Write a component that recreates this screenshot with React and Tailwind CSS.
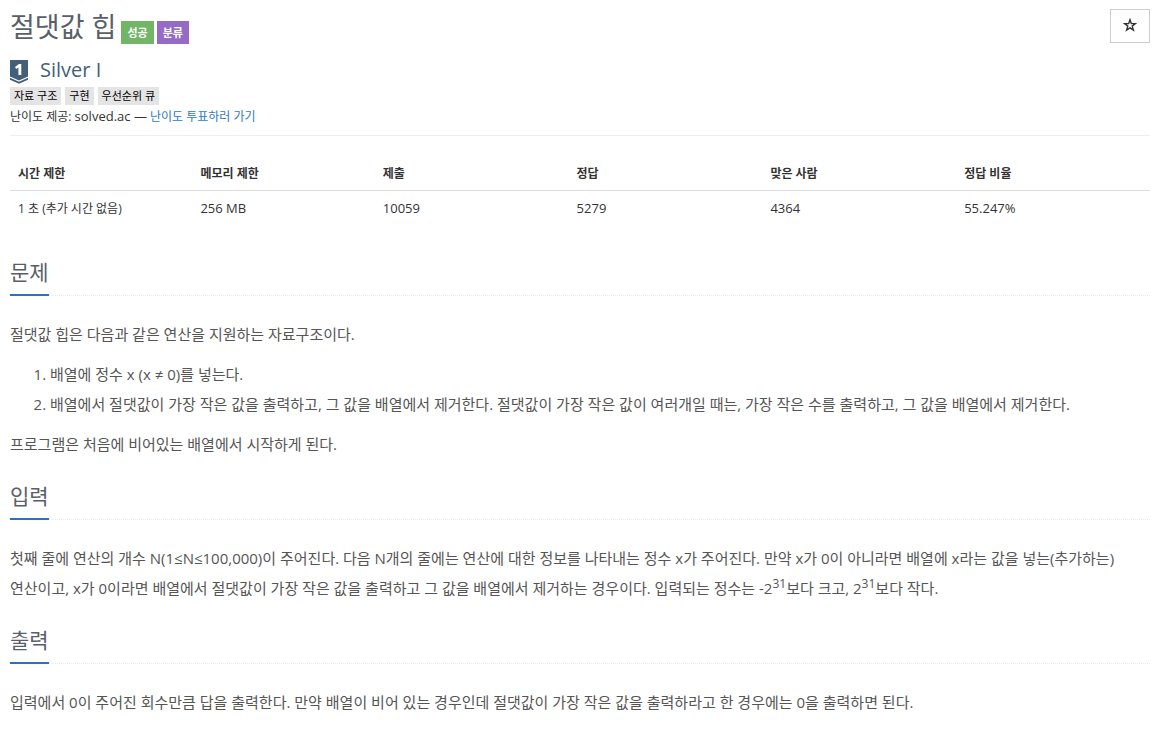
import clsx from 'clsx'

const stats = [
  { label: '시간 제한', value: '1 초 (추가 시간 없음)', width: 'w-[16%]', size: 'text-xs leading-5' },
  { label: '메모리 제한', value: '256 MB', width: 'w-[16%]' },
  { label: '제출', value: '10059', width: 'w-[17%]' },
  { label: '정답', value: '5279', width: 'w-[17%]' },
  { label: '맞은 사람', value: '4364', width: 'w-[17%]' },
  { label: '정답 비율', value: '55.247%', width: 'w-[17%]' },
]

const tags = ['자료 구조', '구현', '우선순위 큐']

function Label({ color, children }) {
  return (
    <span className={clsx('h-[23px] px-[6px] text-[11px] leading-[23px] font-bold text-white', color)}>
      {children}
    </span>
  )
}

// Solved.ac tier badge
function TierBadge() {
  return (
    <svg viewBox="0 0 18 24" className="w-[18px] h-6" aria-hidden="true">
      <path d="M0 0h18v16.4l-9 4-9-4z" fill="#435f7a" />
      <path d="M0 17.8l9 4 9-4v2l-9 4-9-4z" fill="#435f7a" />
      <path d="M11.3 15H8.4V7.6L6.2 9 5 7.1 9 4h2.3z" fill="#fff" />
    </svg>
  )
}

function StarIcon() {
  return (
    <svg viewBox="0 0 14 14" className="mr-px mb-0.5 w-[14px] h-[14px]" fill="none" stroke="#333" strokeWidth="1.4" aria-hidden="true">
      <path d="M7 1.8l1.3 3.7 4.2.1-3.3 2.5 1.2 4L7 9.8l-3.4 2.3 1.2-4-3.3-2.5 4.2-.1z" />
    </svg>
  )
}

// Section with underlined heading
function Section({ title, children }) {
  return (
    <section className="mb-[21px]">
      <div className="mb-[23px] border-b border-dotted border-[#eaeaee]">
        <h2 className="-mb-px inline-block border-b-2 border-[#3071b9] pb-[5px] align-bottom text-[21px] leading-[33px] text-[#585f69]">
          {title}
        </h2>
      </div>
      <div className="space-y-[10px] text-[15px] leading-[30px] break-keep text-[#555]">{children}</div>
    </section>
  )
}

function App() {
  return (
    <main
      lang="ko"
      className="bg-white pt-[9px] pr-[9px] pl-[10px] font-['Open_Sans','Noto_Sans_CJK_KR',sans-serif] text-[13px] leading-5 text-[#333]"
    >
      <header className="flex items-start justify-between border-b border-[#eee] pb-2">
        <div>
          <div className="flex items-end gap-[5px]">
            <h1 className="text-[27px] leading-[35px] text-[#585f69]">절댓값 힙</h1>
            <div className="flex gap-[3px]">
              <Label color="bg-[#72b566]">성공</Label>
              <Label color="bg-[#966bc6]">분류</Label>
            </div>
          </div>
          <div className="mt-3 flex items-end gap-3">
            <TierBadge />
            <span className="text-xl leading-7 text-[#435f7a]">Silver I</span>
          </div>
          <ul className="mt-[3px] flex gap-1 text-[11px] leading-[18px] text-black">
            {tags.map((tag) => (
              <li key={tag} className="bg-[#e4e4e4] px-1">{tag}</li>
            ))}
          </ul>
          <p className="mt-px text-xs leading-5">
            난이도 제공: <span className="text-[13px]">solved.ac —</span>{' '}
            <a href="#vote" className="text-[#3079c2]">난이도 투표하러 가기</a>
          </p>
        </div>
        <button
          type="button"
          aria-label="즐겨찾기"
          className="flex h-[34px] w-10 items-center justify-center border border-[#ccc]"
        >
          <StarIcon />
        </button>
      </header>

      <table className="mt-5 mb-[29px] w-full table-fixed text-left">
        <thead>
          <tr className="border-b border-[#ddd]">
            {stats.map(({ label, width }) => (
              <th key={label} className={clsx('px-2 pt-2 pb-[6px] text-xs leading-5 font-bold', width)}>{label}</th>
            ))}
          </tr>
        </thead>
        <tbody>
          <tr>
            {stats.map(({ label, value, size }) => (
              <td key={label} className={clsx('px-2 pt-[7px] pb-2 align-baseline', size)}>{value}</td>
            ))}
          </tr>
        </tbody>
      </table>

      <Section title="문제">
        <p>절댓값 힙은 다음과 같은 연산을 지원하는 자료구조이다.</p>
        <ol className="list-decimal pl-10">
          <li>배열에 정수 x (x ≠ 0)를 넣는다.</li>
          <li>
            배열에서 절댓값이 가장 작은 값을 출력하고, 그 값을 배열에서 제거한다. 절댓값이 가장 작은 값이 여러개일
            때는, 가장 작은 수를 출력하고, 그 값을 배열에서 제거한다.
          </li>
        </ol>
        <p>프로그램은 처음에 비어있는 배열에서 시작하게 된다.</p>
      </Section>

      <Section title="입력">
        <p>
          첫째 줄에 연산의 개수 N(1≤N≤100,000)이 주어진다. 다음 N개의 줄에는 연산에 대한 정보를 나타내는 정수 x가
          주어진다. 만약 x가 0이 아니라면 배열에 x라는 값을 넣는(추가하는) 연산이고, x가 0이라면 배열에서 절댓값이
          가장 작은 값을 출력하고 그 값을 배열에서 제거하는 경우이다. 입력되는 정수는 -2
          <sup className="text-xs leading-none">31</sup>보다 크고, 2
          <sup className="text-xs leading-none">31</sup>보다 작다.
        </p>
      </Section>

      <Section title="출력">
        <p>
          입력에서 0이 주어진 회수만큼 답을 출력한다. 만약 배열이 비어 있는 경우인데 절댓값이 가장 작은 값을
          출력하라고 한 경우에는 0을 출력하면 된다.
        </p>
      </Section>
    </main>
  )
}

export default App
